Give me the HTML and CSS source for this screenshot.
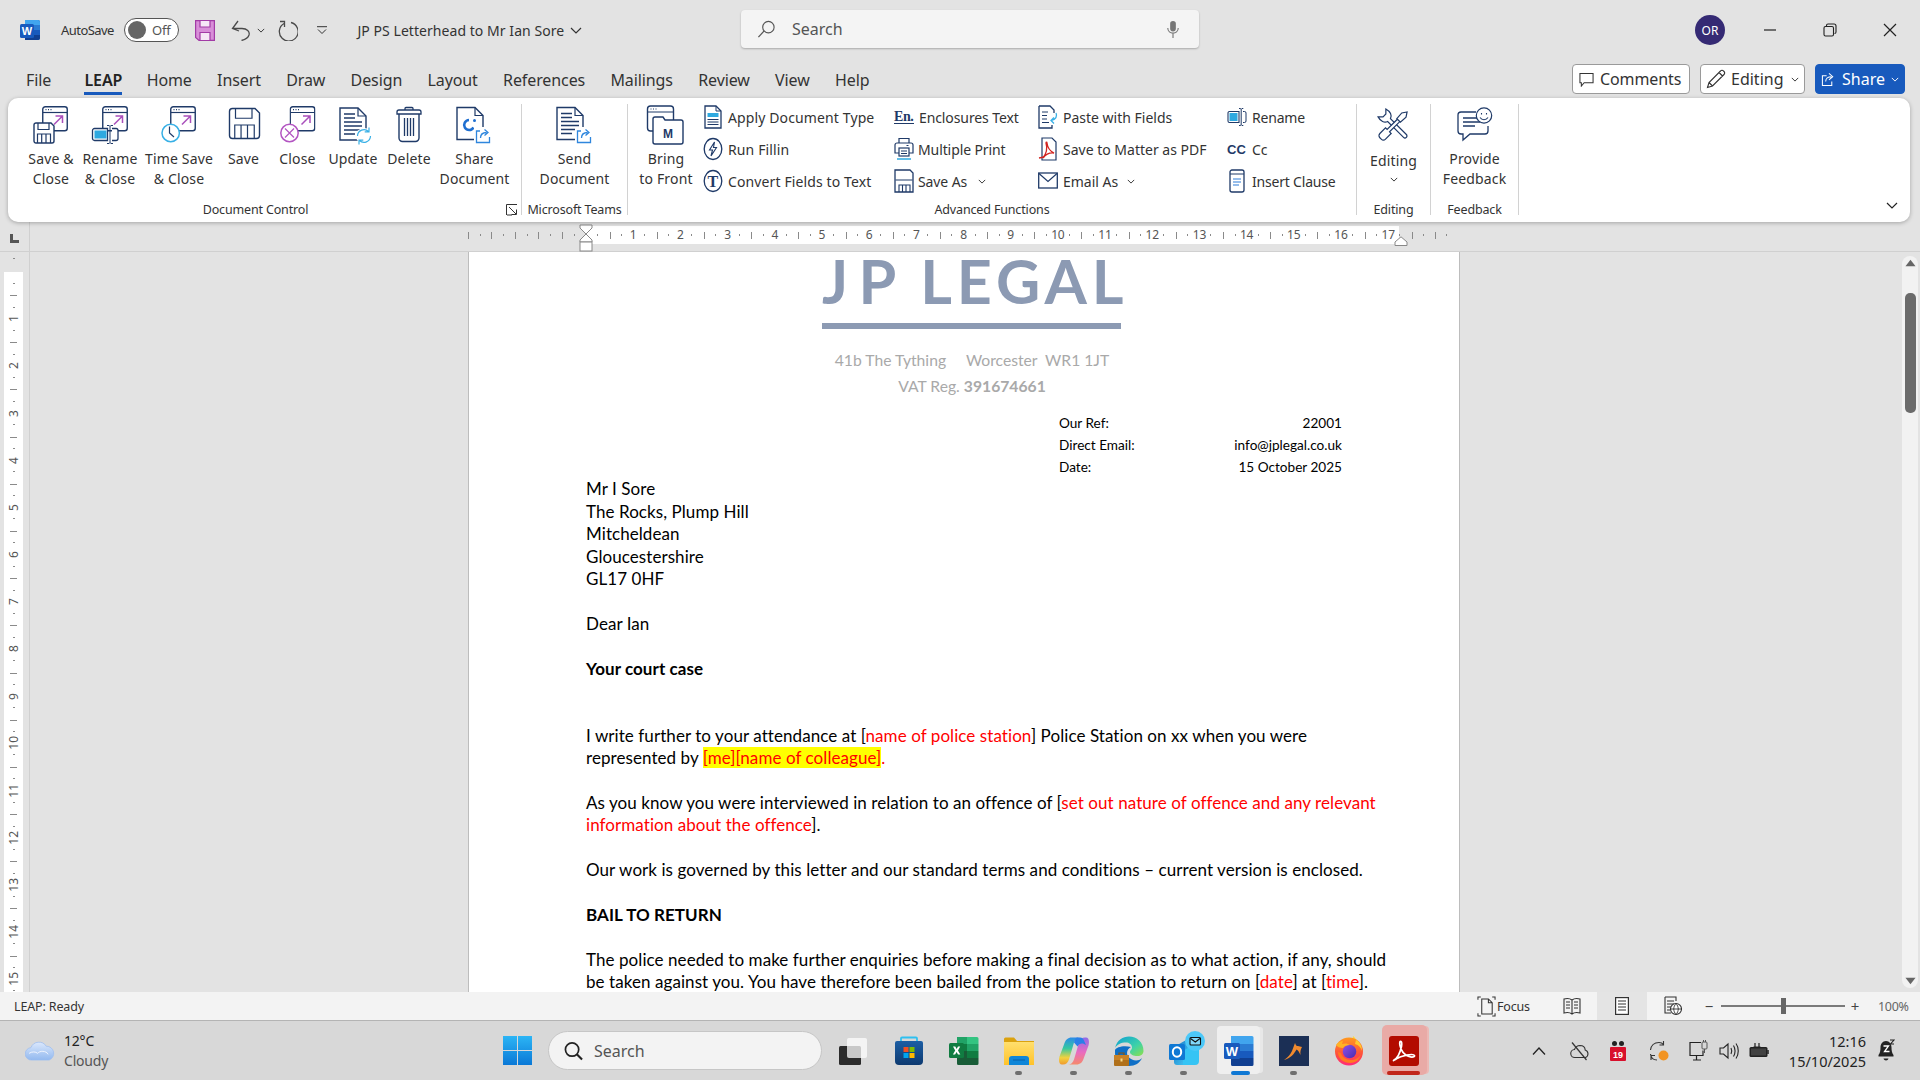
FILE: index.html
```html
<!DOCTYPE html>
<html lang="en">
<head>
<meta charset="utf-8">
<title>JP PS Letterhead to Mr Ian Sore - Word</title>
<link rel="stylesheet" href="styles.css">
</head>
<body>
<svg class="defs" xmlns="http://www.w3.org/2000/svg">
  <symbol id="win" viewBox="0 0 26 26">
    <rect x=".75" y=".75" width="24.5" height="24" rx="2.5" fill="#fff" stroke="#1f3a68" stroke-width="1.4"/>
    <path d="M1 6.5h24" stroke="#1f3a68" stroke-width="1.2"/>
    <path d="M3.5 3.6h1M6 3.6h1M8.500 3.600h1" stroke="#1f3a68" stroke-width="1.2"/>
    <path d="M12 18.500 20 10.500M13.500 10h7v7" fill="none" stroke="#a94fbb" stroke-width="1.5"/>
  </symbol>
  <symbol id="floppy" viewBox="0 0 22 22">
    <path d="M1 3a2 2 0 0 1 2-2h15l3 3v15a2 2 0 0 1-2 2H3a2 2 0 0 1-2-2z" fill="#fff" stroke="#1f3a68" stroke-width="1.4" vector-effect="non-scaling-stroke"/>
    <path d="M5 1v6.500h11V1M4.500 21v-9h13v9M8.700 12v9M13 12v9" fill="none" stroke="#1f3a68" stroke-width="1.2" vector-effect="non-scaling-stroke"/>
  </symbol>
  <symbol id="share" viewBox="0 0 16 16">
    <path d="M5 3H1.500v11.500h13V9" fill="#fff" stroke="#2f86dd" stroke-width="1.3"/>
    <path d="M5.500 10c0-3.500 2.500-5.500 6-5.500M9.500 1.500l3.500 3-3.500 3" fill="none" stroke="#2f86dd" stroke-width="1.3"/>
  </symbol>
  <symbol id="docbase" viewBox="0 0 28 34">
    <path d="M1 1h18l8 8v24H1z" fill="#fff" stroke="#1f3a68" stroke-width="1.4"/>
    <path d="M19 1v8h8" fill="none" stroke="#1f3a68" stroke-width="1.2"/>
  </symbol>
  <symbol id="lines" viewBox="0 0 28 34">
    <path d="M5 7h11M5 11h11M5 15h18M5 19h18M5 23h18M5 27h11" stroke="#1f3a68" stroke-width="1.3"/>
  </symbol>
  <symbol id="chev" viewBox="0 0 10 6">
    <path d="M1 1l4 4 4-4" fill="none" stroke="#333" stroke-width="1.200"/>
  </symbol>
</svg>

<header class="titlebar">
  <div class="qat">
    <svg class="wordlogo" viewBox="0 0 20 20"><path d="M5 0h13a2 2 0 0 1 2 2v16a2 2 0 0 1-2 2H5z" fill="#185abd"/><path d="M5 0h13a2 2 0 0 1 2 2v3H5z" fill="#41a5ee"/><path d="M5 5h15v5H5z" fill="#2b7cd3"/><path d="M5 15h15v3a2 2 0 0 1-2 2H5z" fill="#103f91"/><rect y="4" width="14" height="14" rx="1.500" fill="#185abd"/><text x="7" y="15" class="wordlogo-w">W</text></svg>
    <span class="autosave">AutoSave</span>
    <span class="toggle"><i class="knob"></i><span class="toggle-off">Off</span></span>
    <svg class="qat-save" viewBox="0 0 20 21"><path d="M.6.600h18.800v19.800H4l-3.400-3z" fill="#d88ed8" stroke="#a23ba6" stroke-width="1.200"/><path d="M5 1v6h10V1M5 20v-7.500h10V20" fill="#f6e6f6" stroke="#a23ba6" stroke-width="1.200"/></svg>
    <svg class="qat-undo" viewBox="0 0 20 21"><path d="M7 1 1.500 8.500 8 11M1.500 8.500H11c5 0 8 3 7 6.500-.8 2.500-3.500 4.500-7.500 5.500" fill="none" stroke="#4a4a4a" stroke-width="1.300"/></svg>
    <svg class="qat-mini" viewBox="0 0 10 6"><use href="#chev"/></svg>
    <svg class="qat-redo" viewBox="0 0 20 21"><path d="M6 3.500A9.400 9.400 0 1 0 13 2.500M2 1.500h4.500V7" fill="none" stroke="#4a4a4a" stroke-width="1.300"/></svg>
    <svg class="qat-cust" viewBox="0 0 10 8"><path d="M0 .7h10M1 3.500l4 4 4-4" fill="none" stroke="#333" stroke-width="1"/></svg>
    <span class="doctitle">JP PS Letterhead to Mr Ian Sore</span>
    <svg class="title-chev" viewBox="0 0 12 7"><path d="M1 1l5 5 5-5" fill="none" stroke="#333" stroke-width="1.200"/></svg>
  </div>
  <div class="searchbox">
    <svg class="sb-glass" viewBox="0 0 20 20"><circle cx="12" cy="7.500" r="6" fill="none" stroke="#555" stroke-width="1.200"/><path d="M7.500 11.500 1.500 18" stroke="#555" stroke-width="1.300"/></svg>
    <span class="sb-text">Search</span>
    <svg class="sb-mic" viewBox="0 0 14 20"><rect x="4" y="1" width="6" height="11" rx="3" fill="#777"/><path d="M1.500 8.500c0 7 11 7 11 0M7 14v5" fill="none" stroke="#777" stroke-width="1.200"/></svg>
  </div>
  <div class="caption">
    <span class="avatar">OR</span>
    <span class="capbtn"><svg width="14" height="14" viewBox="0 0 14 14"><path d="M1 7h12" stroke="#222" stroke-width="1.200"/></svg></span>
    <span class="capbtn"><svg width="14" height="14" viewBox="0 0 14 14"><path d="M3.500 3V2.500a1.500 1.500 0 0 1 1.500-1.500h6a2 2 0 0 1 2 2v6a1.500 1.500 0 0 1-1.500 1.500H12" fill="none" stroke="#222" stroke-width="1.100"/><rect x="1" y="3.500" width="9.500" height="9.500" rx="1.500" fill="none" stroke="#222" stroke-width="1.100"/></svg></span>
    <span class="capbtn"><svg width="14" height="14" viewBox="0 0 14 14"><path d="M1 1l12 12M13 1 1 13" stroke="#222" stroke-width="1.200"/></svg></span>
  </div>
</header>

<nav class="tabs">
  <span class="tab">File</span>
  <span class="tab tab-on">LEAP</span>
  <span class="tab">Home</span>
  <span class="tab">Insert</span>
  <span class="tab">Draw</span>
  <span class="tab">Design</span>
  <span class="tab">Layout</span>
  <span class="tab">References</span>
  <span class="tab">Mailings</span>
  <span class="tab">Review</span>
  <span class="tab">View</span>
  <span class="tab">Help</span>
  <div class="tab-actions">
    <span class="act act-comments"><svg class="act-ic" viewBox="0 0 16 16"><path d="M1 1.500h14v10H5.500L2.500 15v-3.500H1z" fill="none" stroke="#333" stroke-width="1.100"/></svg>Comments</span>
    <span class="act act-editing"><svg class="act-pen" viewBox="0 0 20 20"><path d="M1.500 18.500l1.500-5L14.500 2a2 2 0 0 1 3 0l.5.500a2 2 0 0 1 0 3L6.500 17z M3 13.500l3.500 3.500M13 3.500l3.500 3.500" fill="none" stroke="#333" stroke-width="1.100"/></svg>Editing<svg class="act-chev" viewBox="0 0 10 6"><use href="#chev"/></svg></span>
    <span class="act act-share"><svg class="act-ic" viewBox="0 0 16 16"><path d="M6 4H1.500v10.500h10V10" fill="none" stroke="#fff" stroke-width="1.100"/><path d="M5 10c0-3 2.500-5 6-5M8.500 1.500 12.500 5l-4 3.500" fill="none" stroke="#fff" stroke-width="1.100"/></svg>Share<svg class="act-chev" viewBox="0 0 10 6"><path d="M1 1l4 4 4-4" fill="none" stroke="#fff" stroke-width="1.200"/></svg></span>
  </div>
</nav>

<section class="ribbon">
  <div class="group g-doc">
    <div class="bigrow">
      <div class="bigbtn"><svg class="bigic" viewBox="0 0 40 40"><use href="#win" x="11" y="1" width="26" height="26"/><use href="#floppy" x="2" y="17" width="22" height="22"/></svg><span>Save &amp;<br>Close</span></div>
      <div class="bigbtn"><svg class="bigic" viewBox="0 0 40 40"><use href="#win" x="12" y="1" width="26" height="26"/><path d="M2.500 25.500a2 2 0 0 1 2-2h13v12h-13a2 2 0 0 1-2-2zM22 23.500h4a2 2 0 0 1 2 2v8a2 2 0 0 1-2 2h-4" fill="#fff" stroke="#1f3a68" stroke-width="1.300"/><rect x="4.500" y="25.500" width="12" height="8" fill="#2ea9e0"/><path d="M17 20.500h2.200l.8 1 .8-1H23M17 38.500h2.200l.8-1 .8 1H23M20 21.500v16" fill="none" stroke="#1f3a68" stroke-width="1"/></svg><span>Rename<br>&amp; Close</span></div>
      <div class="bigbtn"><svg class="bigic" viewBox="0 0 40 40"><use href="#win" x="11" y="1" width="26" height="26"/><circle cx="11.700" cy="28" r="8.700" fill="#fff" stroke="#38b0e6" stroke-width="1.500"/><path d="M10.500 21.500V28l4.500 4" fill="none" stroke="#1f3a68" stroke-width="1.200"/></svg><span>Time Save<br>&amp; Close</span></div>
      <div class="bigbtn"><svg class="bigic" viewBox="0 0 40 40"><use href="#floppy" x="4" y="2" width="33" height="33"/></svg><span>Save</span></div>
      <div class="bigbtn"><svg class="bigic" viewBox="0 0 40 40"><use href="#win" x="11.500" y="1" width="26" height="26"/><circle cx="11.500" cy="28" r="8.700" fill="#fff" stroke="#b355c2" stroke-width="1.500"/><path d="M7 23.500l9 9M16 23.500l-9 9" stroke="#b355c2" stroke-width="1.200"/></svg><span>Close</span></div>
      <div class="bigbtn"><svg class="bigic" viewBox="0 0 40 40"><use href="#docbase" x="6" y="2" width="28" height="34"/><use href="#lines" x="6" y="2" width="28" height="34"/><circle cx="31" cy="31" r="8" fill="#fff"/><path d="M24.500 31a6.500 6.500 0 0 1 11-4.500M37.500 31a6.500 6.500 0 0 1-11 4.500M36 22.500v4.300h-4.300M26 39.500v-4.300h4.300" fill="none" stroke="#38b0e6" stroke-width="1.200"/></svg><span>Update</span></div>
      <div class="bigbtn"><svg class="bigic" viewBox="0 0 40 40"><path d="M10 9v24a3.500 3.500 0 0 0 3.500 3.500h13A3.500 3.500 0 0 0 30 33V9" fill="#fff" stroke="#1f3a68" stroke-width="1.400"/><path d="M8 9V7a2 2 0 0 1 2-2h20a2 2 0 0 1 2 2v2zM16 5V3.500a1 1 0 0 1 1-1h6a1 1 0 0 1 1 1V5M15.500 13v18M18.500 13v18M21.500 13v18M24.500 13v18" fill="none" stroke="#1f3a68" stroke-width="1.300"/></svg><span>Delete</span></div>
      <div class="bigbtn"><svg class="bigic" viewBox="0 0 40 40"><use href="#docbase" x="1" y="1" width="28" height="35"/><path d="M14 15a5 5 0 1 0 4.500 7.500" fill="none" stroke="#1f6fd0" stroke-width="2.600"/><circle cx="19.500" cy="15.500" r="1.500" fill="#1f6fd0"/><rect x="19" y="22" width="18" height="17" fill="#fff"/><use href="#share" x="20" y="23" width="16" height="16"/></svg><span>Share<br>Document</span></div>
    </div>
    <div class="grouplabel grouplabel-launch"><span class="gl-text">Document Control</span><svg class="launcher" viewBox="0 0 12 12"><path d="M.5 11V.5H11M3 3l7 7M10.500 5.500v5h-5" fill="none" stroke="#333" stroke-width="1"/><path d="M1 11h5" stroke="#333" stroke-width="1"/></svg></div>
  </div>
  <i class="sep"></i>
  <div class="group g-teams">
    <div class="bigrow">
      <div class="bigbtn"><svg class="bigic" viewBox="0 0 40 40"><use href="#docbase" x="1" y="1" width="28" height="35"/><use href="#lines" x="1" y="1" width="28" height="35"/><rect x="20" y="22" width="17" height="17" fill="#fff"/><use href="#share" x="21" y="23" width="16" height="16"/></svg><span>Send<br>Document</span></div>
    </div>
    <div class="grouplabel">Microsoft Teams</div>
  </div>
  <i class="sep"></i>
  <div class="group g-adv">
    <div class="advgrid">
      <div class="bigbtn"><svg class="bigic" viewBox="0 0 40 40"><rect x="1.500" y="1" width="26" height="25" rx="3" fill="#fff" stroke="#1f3a68" stroke-width="1.400"/><path d="M2 7h25M4.500 4h1M7 4h1M9.500 4h1" stroke="#1f3a68" stroke-width="1.200"/><path d="M7 14a2 2 0 0 1 2-2h8l2 3h16a2 2 0 0 1 2 2v20a2 2 0 0 1-2 2H9a2 2 0 0 1-2-2z" fill="#fff" stroke="#1f3a68" stroke-width="1.400"/><text x="22" y="33" class="bring-m">M</text></svg><span>Bring<br>to Front</span></div>
      <div class="smallcol sc-1">
        <div class="smallitem"><svg class="smic" viewBox="0 0 20 24"><path d="M2 1h11l5 5v17H2z" fill="#fff" stroke="#1f3a68" stroke-width="1.300"/><path d="M13 1v5h5" fill="none" stroke="#1f3a68"/><rect x="4.500" y="8" width="11" height="4" fill="#2ea9e0"/><path d="M4.500 14.500h11M4.500 17h11M4.500 19.500h11" stroke="#1f3a68"/></svg>Apply Document Type</div>
        <div class="smallitem"><svg class="smic" viewBox="0 0 20 24"><ellipse cx="10" cy="12" rx="8.800" ry="10.500" fill="none" stroke="#1f3a68" stroke-width="1.300"/><path d="M11.500 5 6.500 13h3L8 19l5.500-8.500h-3z" fill="none" stroke="#1f3a68" stroke-width="1.100"/></svg>Run Fillin</div>
        <div class="smallitem"><svg class="smic" viewBox="0 0 20 24"><ellipse cx="10" cy="12" rx="8.800" ry="10.500" fill="none" stroke="#1f3a68" stroke-width="1.300"/><text x="10" y="17.500" class="sm-t">T</text></svg>Convert Fields to Text</div>
      </div>
      <div class="smallcol sc-2">
        <div class="smallitem"><span class="en-ic">En.</span>Enclosures Text</div>
        <div class="smallitem"><svg class="smic" viewBox="0 0 20 24"><path d="M5 6V1.500h10V6M3 6h14a2 2 0 0 1 2 2v8h-4M5 16H1V8a2 2 0 0 1 2-2" fill="#fff" stroke="#1f3a68" stroke-width="1.200"/><rect x="5" y="11" width="10" height="8" fill="#fff" stroke="#1f3a68" stroke-width="1.200"/><path d="M12.500 8.500h2M7 14h6M7 16.500h6" stroke="#1f3a68"/><path d="M3 22h14" stroke="#2ea9e0" stroke-width="1.500"/></svg>Multiple Print</div>
        <div class="smallitem"><svg class="smic" viewBox="0 0 20 24"><path d="M1 1h15l3 3v19H1z" fill="#fff" stroke="#1f3a68" stroke-width="1.300"/><path d="M1.500 11h17M5 23v-7h11v7M8.500 16v7M12 16v7" fill="none" stroke="#1f3a68" stroke-width="1.100"/></svg>Save As<svg class="inline-chev" viewBox="0 0 10 6"><use href="#chev"/></svg></div>
      </div>
      <div class="smallcol sc-3">
        <div class="smallitem"><svg class="smic" viewBox="0 0 20 24"><path d="M1 1h11l4 4v3M1 1v22h13v-3" fill="none" stroke="#1f3a68" stroke-width="1.300"/><path d="M4 7h6M4 10.500h5M4 14h5M4 17.500h7" stroke="#1f3a68"/><path d="M18 8c1.500 3 0 7-5 7.500M16 12.500l-3 3 3 3" fill="none" stroke="#38b0e6" stroke-width="1.300"/></svg>Paste with Fields</div>
        <div class="smallitem"><svg class="smic" viewBox="0 0 20 24"><path d="M4 1h10l4 4v18H4z" fill="#fff" stroke="#1f3a68" stroke-width="1.200"/><path d="M5 21c3-4 4.500-10 3-15 0-1 1-1 1 0 .5 5 3 8 7 10-4-.5-8 1-11 5z" fill="none" stroke="#d2231f" stroke-width="1.300"/><path d="M1 21l5-1" stroke="#d2231f" stroke-width="1.300"/></svg>Save to Matter as PDF</div>
        <div class="smallitem"><svg class="smic" viewBox="0 0 20 24"><rect x=".7" y="4" width="18.600" height="15" fill="#fff" stroke="#1f3a68" stroke-width="1.300"/><path d="M1 4.500l9 8 9-8" fill="none" stroke="#1f3a68" stroke-width="1.200"/></svg>Email As<svg class="inline-chev chev-email" viewBox="0 0 10 6"><use href="#chev"/></svg></div>
      </div>
      <div class="smallcol sc-4">
        <div class="smallitem"><svg class="smic" viewBox="0 0 20 24"><path d="M1 8a1.500 1.500 0 0 1 1.500-1.500H12v11H2.500A1.500 1.500 0 0 1 1 16z" fill="#fff" stroke="#1f3a68" stroke-width="1.100"/><rect x="2.500" y="8" width="8" height="8" fill="#2ea9e0"/><path d="M12 3.500h1.500l.7 1 .7-1h1.400M12 20.500h1.500l.7-1 .7 1h1.400M14.200 4.500v15M16 6.500h1.500A1.500 1.500 0 0 1 19 8v8a1.500 1.500 0 0 1-1.500 1.500H16" fill="none" stroke="#1f3a68" stroke-width="1"/></svg>Rename</div>
        <div class="smallitem"><span class="cc-ic">CC</span>Cc</div>
        <div class="smallitem"><svg class="smic" viewBox="0 0 20 24"><rect x="3" y="1" width="14" height="22" rx="2" fill="#fff" stroke="#1f3a68" stroke-width="1.300"/><path d="M3 5h14" stroke="#1f3a68"/><path d="M6 10h8M6 13h8M6 16h6" stroke="#2e7dd8" stroke-width="1.100"/></svg>Insert Clause</div>
      </div>
    </div>
    <div class="grouplabel">Advanced Functions</div>
  </div>
  <i class="sep"></i>
  <div class="group g-edit">
    <div class="bigbtn bigbtn-edit"><svg class="bigic" viewBox="0 0 40 40"><g transform="translate(20 20) rotate(-45)"><path d="M-2 15.500a2 2 0 0 0 4 0V-7C5.500-8 7-12 5.500-17L2-13.500h-4L-5.500-17C-7-12-5.500-8-2-7z" fill="#fff" stroke="#1f3a68" stroke-width="1.200"/></g><g transform="translate(20 20) rotate(45)"><path d="M-1.700-6.500h3.400V8h2.300v8a3 3 0 0 1-3 3h-2a3 3 0 0 1-3-3V8h2.300zM-2.500-6.500-3-14l3-4.500 3 4.500-.5 7.500z" fill="#fff" stroke="#1f3a68" stroke-width="1.200"/></g></svg><span class="edit-label">Editing</span><svg class="edit-chev" viewBox="0 0 10 6"><use href="#chev"/></svg></div>
    <div class="grouplabel">Editing</div>
  </div>
  <i class="sep"></i>
  <div class="group g-feed">
    <div class="bigbtn"><svg class="bigic" viewBox="0 0 40 40"><path d="M21 7H6a3 3 0 0 0-3 3v16a3 3 0 0 0 3 3h2v6l7-6h15a3 3 0 0 0 3-3v-5" fill="none" stroke="#1f3a68" stroke-width="1.300"/><path d="M8 13h14M8 17h17M8 21h12" stroke="#1f3a68" stroke-width="1.300"/><circle cx="29" cy="10.500" r="7.700" fill="#fff" stroke="#1f3a68" stroke-width="1.200"/><path d="M26.500 8v1.500M31.500 8v1.500M25 12.500c2 3 6 3 8 0" fill="none" stroke="#1f3a68" stroke-width="1.100"/></svg><span>Provide<br>Feedback</span></div>
    <div class="grouplabel">Feedback</div>
  </div>
  <i class="sep"></i>
  <svg class="collapse" viewBox="0 0 12 7"><path d="M1 1l5 5 5-5" fill="none" stroke="#222" stroke-width="1.200"/></svg>
</section>

<div class="rulerrow">
  <div class="corner"><svg class="corner-l" viewBox="0 0 9 9"><path d="M0 0h3v6h6v3H0z" fill="#555"/></svg></div>
  <div class="hruler">
    <span class="cm blank"></span><span class="cm blank"></span><span class="cm"></span>
    <span class="cm">1</span><span class="cm">2</span><span class="cm">3</span><span class="cm">4</span><span class="cm">5</span><span class="cm">6</span><span class="cm">7</span><span class="cm">8</span><span class="cm">9</span><span class="cm">10</span><span class="cm">11</span><span class="cm">12</span><span class="cm">13</span><span class="cm">14</span><span class="cm">15</span><span class="cm">16</span><span class="cm">17</span>
    <span class="cm blank"></span>
    <svg class="marker-left" viewBox="0 0 14 28"><path d="M1 1h12v3l-6 6-6-6z M7 10l6 6v2H1v-2z" fill="#fff" stroke="#888"/><rect x="1" y="18" width="12" height="9" fill="#fff" stroke="#888"/></svg>
    <svg class="marker-right" viewBox="0 0 14 10"><path d="M7 .8 13 6v3.500H1V6z" fill="#fff" stroke="#888"/></svg>
  </div>
</div>

<main class="workspace">
  <div class="vcol">
    <div class="vruler">
      <div class="vtop"></div>
      <span class="vcm"><b>1</b></span><span class="vcm"><b>2</b></span><span class="vcm"><b>3</b></span><span class="vcm"><b>4</b></span><span class="vcm"><b>5</b></span><span class="vcm"><b>6</b></span><span class="vcm"><b>7</b></span><span class="vcm"><b>8</b></span><span class="vcm"><b>9</b></span><span class="vcm"><b>10</b></span><span class="vcm"><b>11</b></span><span class="vcm"><b>12</b></span><span class="vcm"><b>13</b></span><span class="vcm"><b>14</b></span><span class="vcm"><b>15</b></span>
    </div>
  </div>
  <div class="pagearea">
    <article class="paper">
      <div class="logo"><span class="logo-jp">JP</span> LEGAL</div>
      <div class="logo-rule"></div>
      <div class="addr">41b The Tything&nbsp;&nbsp;&nbsp;&nbsp;&nbsp;Worcester&nbsp;&nbsp;WR1 1JT</div>
      <div class="addr">VAT Reg. <strong>391674661</strong></div>
      <div class="refs">
        <div class="refrow"><span>Our Ref:</span><span>22001</span></div>
        <div class="refrow"><span>Direct Email:</span><span>info@jplegal.co.uk</span></div>
        <div class="refrow"><span>Date:</span><span>15 October 2025</span></div>
      </div>
      <div class="body">
        <p>Mr I Sore<br>The Rocks, Plump Hill<br>Mitcheldean<br>Gloucestershire<br>GL17 0HF</p>
        <p>Dear Ian</p>
        <p class="twoblank"><strong>Your court case</strong></p>
        <p>I write further to your attendance at [<span class="red">name of police station</span>] Police Station on xx when you were<br>represented by <span class="hl">[me<span class="spell">][</span>name of colleague]</span><span class="red">.</span></p>
        <p>As you know you were interviewed in relation to an offence of [<span class="red">set out nature of offence and any relevant</span><br><span class="red">information about the offence</span>].</p>
        <p>Our work is governed by this letter and our standard terms and conditions – current version is enclosed.</p>
        <p><strong>BAIL TO RETURN</strong></p>
        <p>The police needed to make further enquiries before making a final decision as to what action, if any, should<br>be taken against you. You have therefore been bailed from the police station to return on [<span class="red">date</span>] at [<span class="red">time</span>].</p>
      </div>
    </article>
  </div>
  <div class="scrollbar">
    <svg class="sc-arrow" viewBox="0 0 12 8"><path d="M6 .5 11.500 7.500H.5z" fill="#666"/></svg>
    <div class="sc-track"><div class="sc-thumb"></div></div>
    <svg class="sc-arrow" viewBox="0 0 12 8"><path d="M6 7.500.5.500h11z" fill="#666"/></svg>
  </div>
</main>

<footer class="status">
  <span class="st-left">LEAP: Ready</span>
  <div class="st-right">
    <svg class="st-focus" viewBox="0 0 20 22"><path d="M4 1H1v3M4 21H1v-3M16 1h3v3M16 21h3v-3" fill="none" stroke="#333" stroke-width="1.100"/><path d="M5 3h7l4 4v12H5zM12 3v4h4" fill="none" stroke="#333" stroke-width="1.100"/></svg>
    <span class="st-focus-t">Focus</span>
    <svg class="st-read" viewBox="0 0 18 18"><path d="M9 3C7 1.500 3 1.500 1 2v14c2-.5 6-.5 8 1 2-1.500 6-1.500 8-1V2c-2-.5-6-.5-8 1zM9 3v14M3 5h4M3 8h4M3 11h4M11 5h4M11 8h4M11 11h4" fill="none" stroke="#333" stroke-width="1.100"/></svg>
    <span class="st-print"><svg class="st-printic" viewBox="0 0 14 18"><rect x=".6" y=".6" width="12.800" height="16.800" fill="#fff" stroke="#333" stroke-width="1.200"/><path d="M3 4h8M3 7h8M3 10h8M3 13h8" stroke="#333" stroke-width="1.200"/></svg></span>
    <svg class="st-web" viewBox="0 0 18 20"><path d="M1 1h11v4M1 1v16h6" fill="none" stroke="#333" stroke-width="1.100"/><path d="M3 5h7M3 8h7M3 11h4M3 14h3" stroke="#333"/><circle cx="12" cy="13" r="5.500" fill="#fff" stroke="#333" stroke-width="1.100"/><path d="M6.500 13h11M12 7.500c-3 3.500-3 7.500 0 11M12 7.500c3 3.500 3 7.500 0 11" fill="none" stroke="#333" stroke-width=".9"/></svg>
    <span class="zoom-btn">−</span>
    <span class="slider"><i class="slider-thumb"></i></span>
    <span class="zoom-btn zoom-plus">+</span>
    <span class="zoom-pct">100%</span>
  </div>
</footer>

<footer class="taskbar">
  <div class="weather">
    <svg class="weather-ic" viewBox="0 0 32 22"><defs><linearGradient id="wx" x1="0" y1="0" x2="0" y2="1"><stop offset="0" stop-color="#dbe8fc"/><stop offset="1" stop-color="#93b9ef"/></linearGradient></defs><path d="M7 21a6.500 6.500 0 0 1-1-13A9 9 0 0 1 22 6.500 7.500 7.500 0 0 1 25 21z" fill="url(#wx)" stroke="#9dbdf0" stroke-width=".8"/><path d="M4 14c3-2 7-2 9 0 2-3 9-3 11 1" fill="none" stroke="#f0f5fd" stroke-width="1"/></svg>
    <div class="weather-t"><span class="w-temp">12°C</span><span class="w-desc">Cloudy</span></div>
  </div>
  <svg class="startlogo" viewBox="0 0 29 29"><defs><linearGradient id="st" x1="0" y1="0" x2="0" y2="1"><stop offset="0" stop-color="#2cb5f5"/><stop offset="1" stop-color="#0a78d6"/></linearGradient></defs><path d="M0 0h14v14H0zM15 0h14v14H15zM0 15h14v14H0zM15 15h14v14H15z" fill="url(#st)"/></svg>
  <div class="tb-search">
    <svg class="tb-glass" viewBox="0 0 20 20"><circle cx="8.500" cy="8.500" r="7" fill="none" stroke="#222" stroke-width="1.800"/><path d="M13.500 13.500 19 19" stroke="#222" stroke-width="2.200"/></svg>
    <span>Search</span>
  </div>
  <svg class="taskview" viewBox="0 0 29 28"><rect y="9" width="22" height="19" rx="1.500" fill="#2b2b2b"/><rect x="8" y="1" width="20" height="20" rx="2" fill="#fdfdfd" opacity=".75"/></svg>
  <div class="apps">
    <span class="app"><svg class="appic" viewBox="0 0 30 30"><defs><linearGradient id="sto" x1="0" y1="0" x2="0" y2="1"><stop offset="0" stop-color="#1c5ea4"/><stop offset="1" stop-color="#0d3a70"/></linearGradient></defs><path d="M7 6V2.500a1 1 0 0 1 1-1h14a1 1 0 0 1 1 1V6" fill="none" stroke="#2fc0f0" stroke-width="1.800"/><path d="M1 7a2 2 0 0 1 2-2h24a2 2 0 0 1 2 2v18a4 4 0 0 1-4 4H5a4 4 0 0 1-4-4z" fill="url(#sto)"/><rect x="9.500" y="11" width="5" height="5" fill="#f25022"/><rect x="15.500" y="11" width="5" height="5" fill="#7fba00"/><rect x="9.500" y="17" width="5" height="5" fill="#00a4ef"/><rect x="15.500" y="17" width="5" height="5" fill="#ffb900"/></svg></span>
    <span class="app"><svg class="appic" viewBox="0 0 30 30"><path d="M8 1h20a1.500 1.500 0 0 1 1.500 1.500V8H18V1z" fill="#33c481"/><path d="M8 1h10v7H8z" fill="#21a366"/><path d="M8 8h10v7H8z" fill="#107c41"/><path d="M18 8h11.500v7H18z" fill="#21a366"/><path d="M8 15h10v7H8z" fill="#185c37"/><path d="M18 15h11.500v7H18z" fill="#107c41"/><path d="M8 22h21.500v5.500A1.500 1.500 0 0 1 28 29H9.500A1.500 1.500 0 0 1 8 27.500z" fill="#185c37"/><rect y="7" width="15" height="15" rx="1.500" fill="#107c41"/><path d="M4 10.500h2.300L7.600 13l1.400-2.500h2.200L9 14.500l2.300 4H9l-1.400-2.600-1.500 2.600H3.900l2.300-4z" fill="#fff"/></svg></span>
    <span class="app"><svg class="appic" viewBox="0 0 30 30"><defs><linearGradient id="fo" x1="0" y1="0" x2="0" y2="1"><stop offset="0" stop-color="#ffdf6e"/><stop offset="1" stop-color="#ffc229"/></linearGradient></defs><path d="M0 3a1.500 1.500 0 0 1 1.500-1.500H10L13 5h17v5H0z" fill="#dba20f"/><path d="M0 6h30v23H0z" fill="url(#fo)"/><path d="M5 29v-6a3 3 0 0 1 3-3h14a3 3 0 0 1 3 3v6z" fill="#0f86d8"/><path d="M9 24h12" stroke="#0a5ea5" stroke-width="1"/></svg></span>
    <span class="app"><svg class="appic" viewBox="0 0 30 30"><defs><linearGradient id="c1" x1="0" y1="0" x2="0" y2="1"><stop offset="0" stop-color="#2b8be8"/><stop offset=".4" stop-color="#35c8a0"/><stop offset=".75" stop-color="#f3d23e"/><stop offset="1" stop-color="#f09a2e"/></linearGradient><linearGradient id="c2" x1="0" y1="0" x2="0" y2="1"><stop offset="0" stop-color="#f58a6a"/><stop offset=".45" stop-color="#e96bc0"/><stop offset="1" stop-color="#8f6be8"/></linearGradient></defs><path d="M12.500 1.500h8.500c-3 0-5 2-6 5l-5 17c-1 3-3 5-6 5H3c-3 0-3.500-4-2.500-8L5 8.500C6.500 3.500 9 1.500 12.500 1.500z" fill="url(#c1)"/><path d="M12.500 1.500h8.500c-3 0-5 2-6 5l-5 17c-1 3-3 5-6 5H3c-3 0-3.500-4-2.500-8L5 8.500C6.500 3.500 9 1.500 12.500 1.500z" fill="url(#c2)" transform="rotate(180 15 15)"/><path d="M14 1.500h7c2.500 0 3.500 1.500 4 3l2 4.500c-3-2.500-7-2-8.500 1.500L15 6.500c.5-2.500 1-4 3-5z" fill="#2a7fe8"/></svg></span>
    <span class="app"><svg class="appic" viewBox="0 0 30 30"><defs><linearGradient id="e1" x1="0" y1="0" x2="1" y2="1"><stop offset="0" stop-color="#0d9fd6"/><stop offset=".6" stop-color="#3dd2a8"/><stop offset="1" stop-color="#8fe04a"/></linearGradient></defs><path d="M1 12C3 4 9 .5 15 .5 23 .5 29.500 6 29.500 15c0 3-2.500 5-6 5-4 0-7.500-1.500-7.500-4 0-2 2-2 2-4.500 0-3-3-5-6-5-5 0-9 2-11 5.500z" fill="url(#e1)"/><path d="M1 14c0 5 0 8 2 11 6 4 4 5 8 5h4c6 0 11-3 13-8-3 3-7 3-10 1.500-3-1.500-5-3-5-6.500 0-3 2-5 4-6-7-2-15 0-16 3z" fill="#0f6fc6"/><path d="M0 19h15v10a1 1 0 0 1-1 1H1a1 1 0 0 1-1-1z" fill="#b0701a"/><path d="M0 19h15v5H0z" fill="#c98226"/><path d="M5 19v-2h5v2" fill="none" stroke="#8a5510" stroke-width="1.200"/><rect x="6.500" y="22.500" width="2" height="3" fill="#f7d98a"/></svg></span>
    <span class="app app-outlook"><svg class="appic-out" viewBox="0 0 36 34"><defs><linearGradient id="o1" x1="0" y1="0" x2="1" y2="1"><stop offset="0" stop-color="#0f6cbd"/><stop offset="1" stop-color="#50d9ff"/></linearGradient></defs><path d="M5 16 24 5v29H8a3 3 0 0 1-3-3z" fill="url(#o1)"/><path d="M14 34h12a4 4 0 0 0 4-4V10L14 20z" fill="#36c4f4"/><rect y="13" width="16" height="16" rx="1.500" fill="#0f78d4"/><ellipse cx="8" cy="21" rx="4.200" ry="4.800" fill="none" stroke="#fff" stroke-width="2"/><circle cx="26" cy="10" r="10" fill="#4cc8f8"/><rect x="21" y="6.500" width="10.500" height="7.500" rx="1" fill="#fff" fill-opacity=".3" stroke="#111" stroke-width="1.100"/><path d="M21.500 7.500l4.800 3.500 4.700-3.500" fill="none" stroke="#111" stroke-width="1.100"/></svg></span>
    <span class="app app-word"><svg class="appic" viewBox="0 0 30 30"><path d="M7 0h21a1.500 1.500 0 0 1 1.500 1.500V8H7z" fill="#41a5ee"/><path d="M7 8h22.500v7H7z" fill="#2b7cd3"/><path d="M7 15h22.500v7H7z" fill="#185abd"/><path d="M7 22h22.500v6.500A1.500 1.500 0 0 1 28 30H8.500A1.500 1.500 0 0 1 7 28.500z" fill="#103f91"/><rect y="7" width="16" height="16" rx="1.500" fill="#185abd"/><text x="8" y="19.500" class="word-w">W</text></svg></span>
    <span class="app"><svg class="appic" viewBox="0 0 30 30"><rect width="30" height="30" fill="#1b2f55"/><path d="M5 24c4-3 6-5 8-9l3-8c1 3 2 3 3 3l4 1c-1 2-2 4-1.500 8-1.500-3-2.500-5-4-5.500-2 4-6 9-12.500 10.500z" fill="#f08a2e"/></svg></span>
    <span class="app"><svg class="appic" viewBox="0 0 30 30"><defs><linearGradient id="f1" x1="0" y1="0" x2="0" y2="1"><stop offset="0" stop-color="#ff9a1f"/><stop offset=".6" stop-color="#ff4f3d"/><stop offset="1" stop-color="#ff2b7a"/></linearGradient><linearGradient id="f2" x1="0" y1="0" x2="1" y2="1"><stop offset="0" stop-color="#8d52e8"/><stop offset="1" stop-color="#4b2bb0"/></linearGradient></defs><path d="M19 0c3 2.500 4 4.500 4.500 7L18 8z" fill="#ffd93b"/><circle cx="15" cy="15.500" r="14" fill="url(#f1)"/><circle cx="15.500" cy="15.500" r="6.800" fill="url(#f2)"/><path d="M2 9c2-3 5-4 7-4l-1 3c3-1 6-.5 8 1-3 0-6 1-7 3-3 0-5.500-1-7-3z" fill="#ffb325"/><path d="M22 4c4 2 6 6 6 11-1-3-3-6-7-7z" fill="#ffcb2e"/><path d="M4 16c0 7 6 11 12 11 6 0 10-4 11-9-2 4-6 6-10 6-5 0-9-3-10-7z" fill="#ff7a1f"/></svg></span>
    <span class="app app-acro"><svg class="appic" viewBox="0 0 30 30"><rect width="30" height="30" rx="3" fill="#b30b00"/><path d="M5 24c4-2 6-7 7.500-13.500.4-2.500.3-4.500-.5-5-1.200-.7-1.600 1.500-1 4 1 5 4.500 9.500 9 11 3 1 6 .5 5.500-1-.5-1.300-4-1.200-8-.3-4 .9-8 2.300-10 3.500-2.500 1.500-3.800 2.700-2.500 1.300z" fill="none" stroke="#fff" stroke-width="1.700"/></svg></span>
  </div>
  <div class="tray">
    <svg class="tray-ic" viewBox="0 0 22 22" width="22" height="22"><path d="M5 14.500 11 8l6 6.500" fill="none" stroke="#222" stroke-width="1.300"/></svg>
    <svg class="tray-ic t-off" viewBox="0 0 22 22" width="22" height="22"><path d="M7 17.500a4 4 0 0 1-.5-8A6 6 0 0 1 12 5.500c3 0 5 2 5.200 4.500a4 4 0 0 1 .3 7.500z" fill="none" stroke="#333" stroke-width="1.100"/><path d="M4 2.500 18.500 20" stroke="#333" stroke-width="1.200"/></svg>
    <svg class="tray-ic t-cal" viewBox="0 0 22 22" width="22" height="22"><circle cx="7.500" cy="3.500" r="2.500" fill="#222"/><circle cx="14.500" cy="3.500" r="2.500" fill="#222"/><rect x="3" y="7" width="16" height="14" rx="1" fill="#d8102c"/><text x="11" y="18" class="cal-t">19</text></svg>
    <svg class="tray-ic t-sync" viewBox="0 0 22 22" width="22" height="22"><path d="M2.500 10C3 6 6 2.500 11 2.500c2 0 3.500.8 4.500 2M15.500 1v4h-4M9 20c-3 0-6-2-6.500-6M3 20v-4.500h4" fill="none" stroke="#333" stroke-width="1.100"/><circle cx="15.500" cy="15.500" r="5" fill="#f29423"/></svg>
    <svg class="tray-ic t-disp" viewBox="0 0 22 22" width="22" height="22"><path d="M13 2.500H2v13h13v-5M5 20h8M8.500 15.500V20" fill="none" stroke="#222" stroke-width="1.200"/><rect x="14" y="2" width="5" height="7" rx="1" fill="none" stroke="#555"/><path d="M15.500 2V0M17.500 2V0M16.500 9v4" stroke="#555"/></svg>
    <svg class="tray-ic t-spk" viewBox="0 0 22 22" width="22" height="22"><path d="M2 8v6h3.500L10 18V4L5.500 8z" fill="none" stroke="#222" stroke-width="1.100"/><path d="M13 8c1 2 1 4 0 6M15.500 5.500c2 3.500 2 7.500 0 11M18 3.500c3 4 3 11 0 15" fill="none" stroke="#222" stroke-width="1.100"/></svg>
    <svg class="tray-ic t-bat" viewBox="0 0 22 22" width="22" height="22"><rect x="1.500" y="7" width="18" height="10" rx="1.500" fill="#222"/><rect x="3" y="8.500" width="15" height="7" fill="#fff" opacity=".15"/><path d="M20 10v4" stroke="#222" stroke-width="1.500"/><path d="M7 7V3M11 7V3M5.500 7h7" fill="none" stroke="#222" stroke-width="1.200"/></svg>
    <div class="clock"><span>12:16</span><span>15/10/2025</span></div>
    <svg class="tray-bell" viewBox="0 0 18 24"><path d="M9 2c-3.500 0-5.500 3-5.500 6.500 0 3.500-.5 5.500-2 7.500v1.500h15V16c-1.500-2-2-4-2-7.500C14.500 5 12.500 2 9 2z" fill="#222"/><path d="M6.500 19.500c.5 2.500 4.500 2.500 5 0z" fill="#222"/><path d="M6.500 7h5l-4 5.500h5" fill="none" stroke="#fff" stroke-width="1.300"/><path d="M13 1h4l-3.500 4H17" fill="none" stroke="#222" stroke-width="1.100"/></svg>
  </div>
</footer>
</body>
</html>
```
FILE: styles.css
```css
* { box-sizing: border-box; }
html, body { margin: 0; padding: 0; }
body {
  width: 1920px;
  height: 1080px;
  overflow: hidden;
  display: flex;
  flex-direction: column;
  background: #e3e3e3;
  color: #262626;
  font-family: "Noto Sans", "Open Sans", sans-serif;
  font-size: 14px;
}
.defs { display: none; }
svg { display: block; flex: none; }

/* ---------- title bar ---------- */
.titlebar { height: 60px; flex: none; display: flex; align-items: center; }
.qat { width: 741px; flex: none; display: flex; align-items: center; padding-left: 20px; }
.wordlogo { width: 20px; height: 20px; }
.wordlogo-w { font: 700 11px "Liberation Sans", sans-serif; fill: #fff; text-anchor: middle; }
.word-w { font: 700 13px "Liberation Sans", sans-serif; fill: #fff; text-anchor: middle; }
.autosave { width: 53px; margin-left: 21px; font-size: 13px; white-space: nowrap; letter-spacing: -.55px; color: #333; }
.toggle { width: 55px; height: 24px; margin-left: 10px; border: 1.500px solid #555; border-radius: 12px; background: #fff; display: flex; align-items: center; padding-left: 3px; }
.knob { width: 18px; height: 18px; border-radius: 50%; background: #666; flex: none; }
.toggle-off { margin-left: 6px; font-size: 13px; color: #555; letter-spacing: -.2px; }
.qat-save { width: 20px; height: 21px; margin-left: 16px; }
.qat-undo { width: 20px; height: 21px; margin-left: 16px; }
.qat-mini { width: 8px; height: 5px; margin-left: 6px; }
.qat-redo { width: 20px; height: 21px; margin-left: 13px; }
.qat-cust { width: 10px; height: 8px; margin-left: 19px; }
.doctitle { width: 206px; margin-left: 30.500px; white-space: nowrap; font-size: 14px; color: #333; letter-spacing: .05px; }
.title-chev { width: 12px; height: 7px; margin-left: 6px; }
.searchbox { width: 458px; height: 38px; flex: none; margin-top: -2px; background: #f4f4f4; border-radius: 4px; box-shadow: 0 1px 2px rgba(0,0,0,.25); display: flex; align-items: center; padding-left: 16px; }
.sb-glass { width: 19px; height: 19px; }
.sb-text { margin-left: 16px; font-size: 16px; color: #555; }
.sb-mic { width: 14px; height: 19px; margin-left: auto; margin-right: 19px; }
.caption { flex: 1; display: flex; justify-content: flex-end; align-items: center; }
.avatar { width: 30px; height: 30px; margin-right: 15px; border-radius: 50%; background: #352a74; color: #fff; font-size: 12px; display: flex; align-items: center; justify-content: center; }
.capbtn { width: 60px; display: flex; justify-content: center; }

/* ---------- tabs ---------- */
.tabs { height: 38px; flex: none; display: flex; gap: 25.300px; align-items: flex-start; padding: 8px 15px 0 26px; font-size: 16px; color: #333; }
.tab { height: 27px; line-height: 24px; border-bottom: 3px solid transparent; white-space: nowrap; letter-spacing: -.1px; }
.tab-on { font-weight: 600; border-bottom-color: #185abd; color: #222; margin: 0 -1px 0 8px; }
.tab-actions { margin-left: auto; margin-top: -4px; display: flex; gap: 10px; }
.act { height: 30px; display: flex; align-items: center; justify-content: flex-start; background: #fff; border: 1px solid #9a9a9a; border-radius: 4px; font-size: 16px; color: #333; }
.act-comments { width: 118px; padding-left: 6px; letter-spacing: -.1px; }
.act-editing { width: 105px; padding-left: 5px; }
.act-share { width: 90px; padding-left: 5px; background: #185abd; border-color: #185abd; color: #fff; }
.act-ic { width: 15px; height: 15px; margin-right: 6px; }
.act-pen { width: 20px; height: 20px; margin-right: 5px; }
.act-chev { width: 8px; height: 5px; margin-left: auto; margin-right: 5px; }

/* ---------- ribbon ---------- */
.ribbon { height: 124px; flex: none; margin: 0 10px 0 8px; padding-top: 6px; background: #fff; border-radius: 10px; box-shadow: 0 1px 4px rgba(0,0,0,.28); display: flex; position: relative; z-index: 2; }
.group { height: 118px; flex: none; display: flex; flex-direction: column; }
.sep { width: 1px; height: 111px; flex: none; background: #d2d2d2; }
.g-doc { width: 513px; padding-left: 14px; }
.g-teams { width: 105px; }
.g-adv { width: 728px; }
.g-edit { width: 73px; }
.g-feed { width: 87px; }
.bigrow { height: 93px; display: grid; }
.g-doc .bigrow { grid-template-columns: 58px 60px 78px 51px 57px 54px 58px 73px; }
.bigbtn { display: flex; flex-direction: column; align-items: center; text-align: center; line-height: 20px; white-space: nowrap; color: #333; font-size: 14px; letter-spacing: .15px; }
.group > .bigbtn { height: 93px; flex: none; }
.bigic { width: 40px; height: 40px; margin: 1px 0 4px; }
.grouplabel { height: 25px; line-height: 25px; flex: none; text-align: center; white-space: nowrap; font-size: 12.500px; color: #333; letter-spacing: -.15px; }
.grouplabel-launch { display: flex; align-items: center; margin-left: -14px; }
.gl-text { flex: 1; text-align: center; }
.launcher { width: 12px; height: 12px; margin-right: 3px; margin-left: 3px; }
.advgrid { height: 93px; display: grid; grid-template-columns: 76px 190px 144px 189px 129px; }
.smallcol { display: flex; flex-direction: column; gap: 6px; }
.smallitem { height: 26px; display: flex; align-items: center; white-space: nowrap; font-size: 14px; color: #333; letter-spacing: .12px; }
.sc-2 .smallitem { letter-spacing: -.1px; }
.sc-3 .smallitem { letter-spacing: 0; }
.sc-4 .smallitem { letter-spacing: -.2px; }
.smic { width: 20px; height: 24px; margin-right: 4px; }
.sc-1 .smic { margin-left: -1px; margin-right: 5px; }
.sc-3 .smic { margin-right: 5px; }
.sc-4 .smic { margin-right: 5px; }
.en-ic { width: 20px; margin-right: 5px; font: 700 14px "Liberation Serif", serif; color: #1f3a68; border-bottom: 1px solid #1f3a68; line-height: 13px; letter-spacing: -.4px; }
.cc-ic { width: 20px; margin-right: 5px; font: 700 13px "Liberation Sans", sans-serif; color: #1f3a68; letter-spacing: 0; }
.inline-chev { width: 8px; height: 5px; margin-left: 11px; }
.chev-email { margin-left: 9px; }
.bring-m { font: 700 12px "Liberation Sans", sans-serif; fill: #1f3a68; text-anchor: middle; }
.sm-t { font: 700 16px "Liberation Serif", serif; fill: #1f3a68; text-anchor: middle; }
.bigbtn-edit .bigic { margin: 1px 0 6px; }
.edit-chev { width: 8px; height: 5px; margin-top: 6px; }
.collapse { width: 12px; height: 7px; align-self: flex-end; margin: 0 12px 13px auto; }

/* ---------- rulers ---------- */
.rulerrow { height: 30px; flex: none; display: flex; border-bottom: 1px solid #d0d0d0; }
.corner { width: 30px; flex: none; border-right: 1px solid #d0d0d0; display: flex; padding: 12px 0 0 10px; }
.corner-l { width: 9px; height: 9px; }
.hruler {
  width: 992px; height: 18px; margin: 4px 0 0 438px; display: flex; position: relative;
  background: linear-gradient(to right, transparent 118px, #fff 118px, #fff 931px, transparent 931px);
}
.cm {
  width: 47.200px; height: 18px; flex: none; text-align: center; line-height: 18px; font-size: 12px; color: #555; letter-spacing: -.2px;
  background-image: linear-gradient(#8a8a8a,#8a8a8a), linear-gradient(#8a8a8a,#8a8a8a), linear-gradient(#8a8a8a,#8a8a8a);
  background-repeat: no-repeat;
  background-size: 1px 7px, 1px 2px, 1px 2px;
  background-position: 0 center, 25% center, 75% center;
}
.blank { position: relative; }
.blank::after { content: ""; display: block; width: 1px; height: 7px; margin: 5.500px auto 0; background: #8a8a8a; }
.marker-left { width: 14px; height: 28px; position: absolute; left: 111px; top: -2px; }
.marker-right { width: 14px; height: 10px; position: absolute; left: 926px; top: 10px; }

/* ---------- workspace ---------- */
.workspace { flex: 1; min-height: 0; display: flex; }
.vcol { width: 30px; flex: none; border-right: 1px solid #d0d0d0; overflow: hidden; }
.vruler { width: 19px; margin-left: 4px; background: linear-gradient(to bottom, transparent 20px, #fff 20px); }
.vtop { height: 43px; background-image: linear-gradient(#8a8a8a,#8a8a8a), linear-gradient(#8a8a8a,#8a8a8a); background-repeat: no-repeat; background-size: 2px 1px, 2px 1px; background-position: 9px 6px, 9px 31px; }
.vcm {
  display: flex; width: 19px; height: 47.200px; align-items: center; justify-content: center;
  background-image: linear-gradient(#8a8a8a,#8a8a8a), linear-gradient(#8a8a8a,#8a8a8a), linear-gradient(#8a8a8a,#8a8a8a);
  background-repeat: no-repeat;
  background-size: 7px 1px, 2px 1px, 2px 1px;
  background-position: center 0, center 25%, center 75%;
}
.vcm b { font-weight: 400; font-size: 12px; color: #555; writing-mode: vertical-rl; transform: rotate(180deg); }
.pagearea { flex: 1; min-width: 0; }
.paper { width: 992px; height: 100%; margin-left: 438px; background: #fff; border-left: 1px solid #bdbdbd; border-right: 1px solid #bdbdbd; font-family: Lato, "Liberation Sans", sans-serif; color: #000; }
.logo { width: 300px; height: 56px; margin-left: 353px; padding-top: 1px; line-height: 56px; text-align: center; font-size: 61px; font-weight: 700; color: #8c9ab3; white-space: nowrap; letter-spacing: 4.900px; word-spacing: -6px; }
.logo-jp { letter-spacing: 10.300px; }
.logo-rule { width: 299px; height: 6px; margin: 15px 0 0 353px; background: #8c9ab3; }
.addr { width: 300px; margin-left: 353px; height: 26px; line-height: 26px; text-align: center; font-size: 15.700px; color: #a9a9a9; white-space: nowrap; }
.logo-rule + .addr { margin-top: 17.500px; }
.refs { width: 283px; margin: 14.500px 0 0 590px; font-size: 13.600px; }
.refrow { height: 21.800px; line-height: 21.800px; display: flex; justify-content: space-between; white-space: nowrap; }
.body { margin-left: 117px; font-size: 17px; line-height: 22.400px; letter-spacing: .07px; white-space: nowrap; }
.body p { margin: 0 0 22.400px; }
.body p.twoblank { margin-bottom: 44.800px; }
.red { color: #ff0000; }
.hl { background: #ffff00; color: #ff0000; }
.spell { text-decoration: underline double #2b6fd6; }

.scrollbar { width: 16px; flex: none; margin: 4px 2px 4px 0; background: #f2f2f2; border-radius: 8px; display: flex; flex-direction: column; align-items: center; padding: 3px 0; }
.sc-arrow { width: 11px; height: 8px; flex: none; }
.sc-track { flex: 1; width: 100%; padding-top: 26px; display: flex; justify-content: center; }
.sc-thumb { width: 11px; height: 120px; border-radius: 5px; background: #6b6b6b; }

/* ---------- status bar ---------- */
.status { height: 29px; flex: none; background: #f3f3f3; border-bottom: 1px solid #b4b4b4; display: flex; align-items: center; font-size: 12.500px; color: #333; padding-left: 14px; }
.st-left { letter-spacing: -.15px; }
.st-right { margin-left: auto; display: flex; align-items: center; height: 100%; }
.st-focus { width: 19px; height: 21px; }
.st-focus-t { width: 34px; margin-left: 1px; font-size: 12.500px; letter-spacing: -.2px; }
.st-read { width: 18px; height: 18px; margin-left: 32px; }
.st-print { width: 50px; height: 100%; margin-left: 16px; background: #e4e4e4; display: flex; align-items: center; justify-content: center; }
.st-printic { width: 14px; height: 18px; }
.st-web { width: 18px; height: 20px; margin-left: 17px; }
.zoom-btn { width: 12px; margin-left: 21px; text-align: center; font-size: 15px; color: #444; }
.slider { width: 124px; height: 2px; margin-left: 6px; background: #7a7a7a; position: relative; }
.slider-thumb { position: absolute; left: 60px; top: -7px; width: 5px; height: 16px; background: #666; }
.zoom-plus { margin-left: 4px; }
.zoom-pct { width: 30px; margin: 0 12px 0 17px; font-size: 12.500px; color: #666; letter-spacing: -.3px; }

/* ---------- taskbar ---------- */
.taskbar { height: 59px; flex: none; background: #d8d8d8; display: flex; align-items: center; position: relative; }
.weather { width: 503px; flex: none; display: flex; align-items: center; padding-left: 25px; }
.weather-ic { width: 31px; height: 21px; }
.weather-t { margin-left: 8px; display: flex; flex-direction: column; line-height: 20px; font-size: 14px; letter-spacing: -.2px; }
.w-temp { color: #222; }
.w-desc { color: #555; }
.startlogo { width: 29px; height: 29px; }
.tb-search { width: 274px; height: 39px; margin-left: 16px; background: #f3f3f3; border-radius: 20px; border: 1px solid #c6c6c6; display: flex; align-items: center; padding-left: 15px; font-size: 16px; color: #555; }
.tb-glass { width: 19px; height: 20px; margin-right: 11px; }
.taskview { width: 29px; height: 28px; margin-left: 17px; }
.apps { display: flex; margin-left: 13px; align-self: stretch; }
.app { width: 55px; height: 100%; display: flex; align-items: center; justify-content: center; position: relative; }
.appic { width: 30px; height: 30px; }
.appic-out { width: 36px; height: 34px; margin: -6px 0 0 6px; }
.app:nth-child(n+3):nth-child(-n+6)::after, .app:nth-child(8)::after { content: ""; position: absolute; left: 24px; bottom: 5px; width: 7px; height: 4px; border-radius: 2px; background: #6f6f6f; }
.app-word::before { content: ""; position: absolute; left: 6px; top: 5px; width: 43px; height: 48px; background: #efefef; border-radius: 4px; box-shadow: 4px 0 0 -1px #e8e8e8; }
.app-word::after { content: ""; position: absolute; left: 20px; bottom: 5px; width: 19px; height: 4px; border-radius: 2px; background: #0f78d4; }
.app-word .appic { position: relative; }
.app-acro::before { content: ""; position: absolute; left: 6px; top: 4px; width: 45px; height: 50px; background: #e9aaa6; border-radius: 5px; box-shadow: 3px 0 0 -1px #ecb9b5; }
.app-acro::after { content: ""; position: absolute; left: 11px; bottom: 5px; width: 33px; height: 4px; border-radius: 2px; background: #c1271b; }
.app-acro .appic { position: relative; }
.tray { margin-left: auto; display: flex; align-items: center; padding-right: 25px; }
.t-off { margin-left: 18px; }
.t-cal { margin-left: 17px; }
.t-sync { margin-left: 19px; }
.t-disp { margin-left: 18px; }
.t-spk { margin-left: 8px; }
.t-bat { margin-left: 8px; }
.cal-t { font: 700 9px "Liberation Sans", sans-serif; fill: #fff; text-anchor: middle; }
.clock { width: 80px; margin-left: 16.500px; display: flex; flex-direction: column; align-items: flex-end; line-height: 20px; font-size: 14.500px; color: #222; }
.tray-bell { width: 18px; height: 24px; margin-left: 11px; }
```
